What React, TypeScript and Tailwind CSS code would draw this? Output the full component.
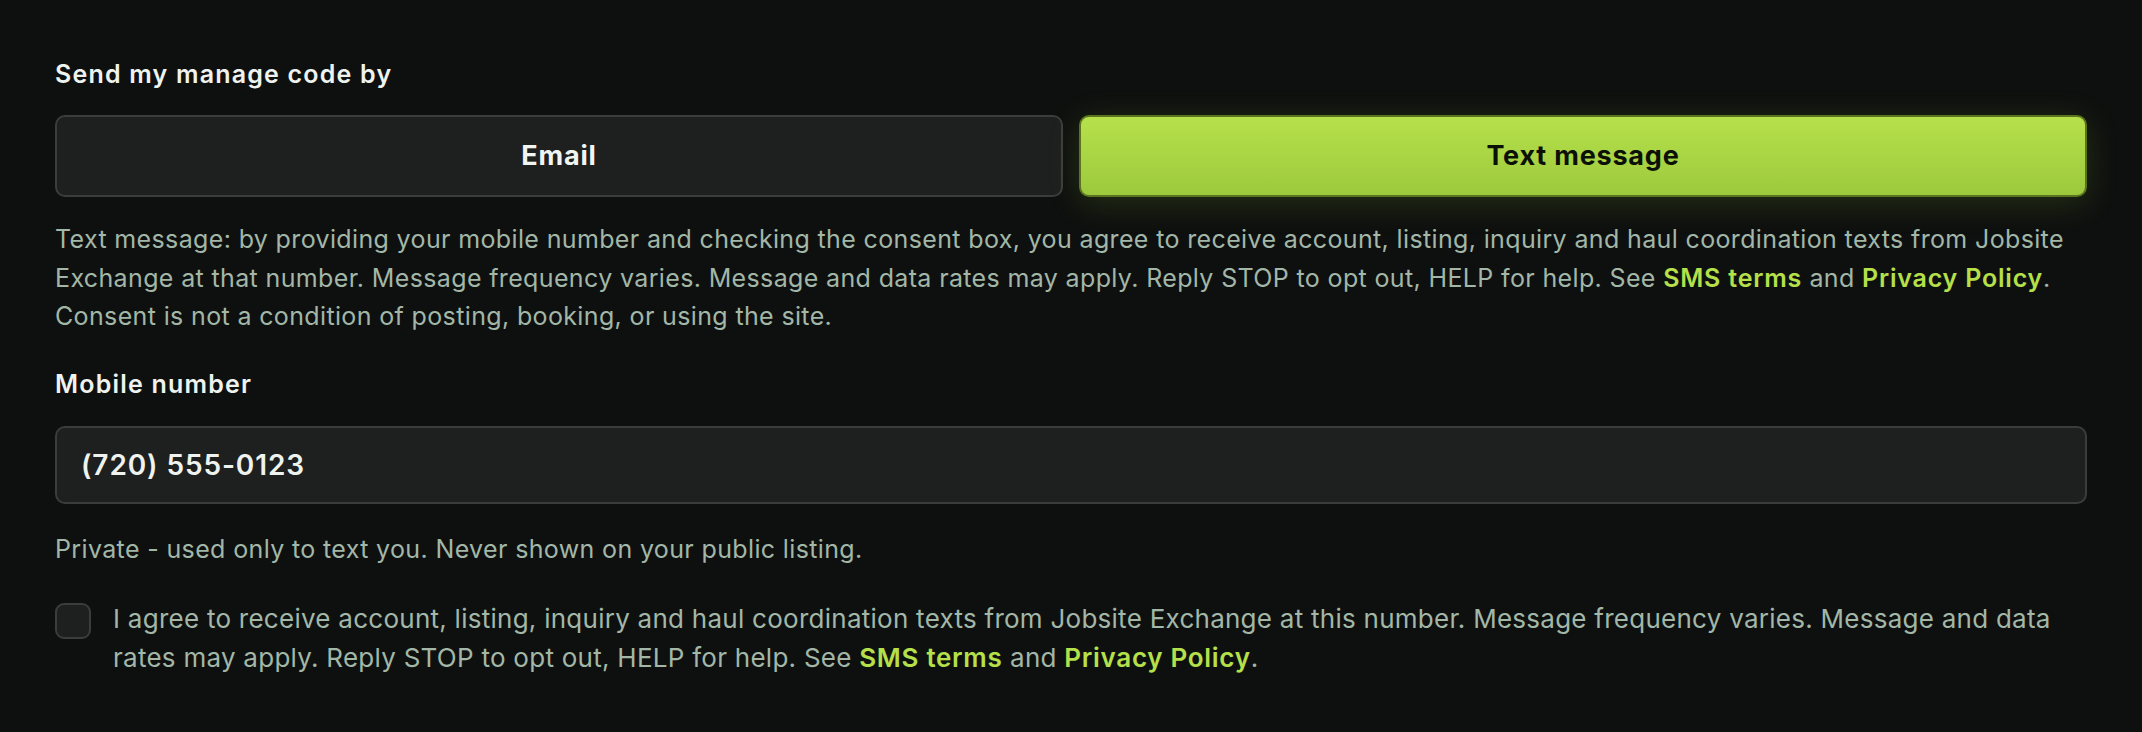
export default function App() {
  return (
    <div className="min-h-screen bg-[#0e100f] px-[55px] pt-[56px] font-['Inter',sans-serif] text-[25px] tracking-[0.36px]">
      <h2 className="font-semibold leading-[36px] tracking-[1.2px] text-[#eef3ef]">Send my manage code by</h2>

      <div className="mt-[23px] grid grid-cols-2 gap-4">
        <button className="h-[82px] rounded-[10px] border-2 border-[#3b3d3c] bg-[#1e1f1f] text-[27px] font-bold tracking-[0.8px] text-[#f1f5f2]">
          Email
        </button>
        <button className="h-[82px] rounded-[10px] border-2 border-[#5a7420] bg-gradient-to-b from-[#b7e14b] to-[#9cc93d] text-[27px] font-bold tracking-[0.8px] text-[#0c1108] shadow-[0_6px_32px_rgba(150,200,50,0.18)]">
          Text message
        </button>
      </div>

      <p className="mt-[23px] leading-[38.5px] text-[#a2b7a7]">
        Text message: by providing your mobile number and checking the consent box, you agree to receive account,
        listing, inquiry and haul coordination texts from Jobsite Exchange at that number. Message frequency varies.
        Message and data rates may apply. Reply STOP to opt out, HELP for help. See{" "}
        <a className="font-semibold tracking-[0.8px] text-[#b5e04a]">SMS terms</a> and{" "}
        <a className="font-semibold tracking-[0.8px] text-[#b5e04a]">Privacy Policy</a>. Consent is not a condition of
        posting, booking, or using the site.
      </p>

      <label className="mt-[30px] block font-semibold leading-[36px] tracking-[1.2px] text-[#eef3ef]">
        Mobile number
      </label>
      <div className="mt-6 flex h-[78px] items-center rounded-[10px] border-2 border-[#3b3d3c] bg-[#1e1f1f] px-6">
        <span className="text-[28px] font-semibold tracking-[0.9px] text-[#eef3ef]">(720) 555-0123</span>
      </div>

      <p className="mt-[26px] leading-[38.5px] text-[#a2b7a7]">
        Private - used only to text you. Never shown on your public listing.
      </p>

      <div className="mt-[31px] flex items-start gap-[22px]">
        <span className="mt-1 h-9 w-9 shrink-0 rounded-[9px] border-2 border-[#3b3d3c] bg-[#1e1f1f]" />
        <p className="text-[26px] leading-[39px] tracking-[0.26px] text-[#a2b7a7]">
          I agree to receive account, listing, inquiry and haul coordination texts from Jobsite Exchange at this
          number. Message frequency varies. Message and data rates may apply. Reply STOP to opt out, HELP for help.
          See <a className="font-semibold tracking-[0.7px] text-[#b5e04a]">SMS terms</a> and{" "}
          <a className="font-semibold tracking-[0.7px] text-[#b5e04a]">Privacy Policy</a>.
        </p>
      </div>
    </div>
  );
}
